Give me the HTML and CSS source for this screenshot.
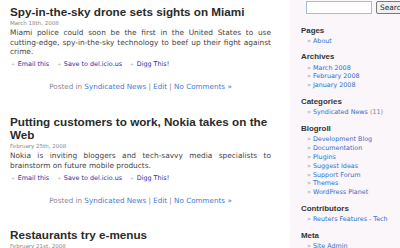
FILE: index.html
```html
<!DOCTYPE html>
<html>
<head>
<meta charset="utf-8">
<link rel="stylesheet" href="styles.css">
</head>
<body>
<div class="page">
  <main class="content">
    <article class="post">
      <h2 class="title">Spy-in-the-sky drone sets sights on Miami</h2>
      <div class="date">March 18th, 2008</div>
      <p class="entry">Miami police could soon be the first in the United States to use cutting-edge, spy-in-the-sky technology to beef up their fight against crime.</p>
      <ul class="actions">
        <li><span class="plus">+</span><a href="#">Email this</a></li>
        <li><span class="plus">+</span><a href="#">Save to del.icio.us</a></li>
        <li><span class="plus">+</span><a href="#">Digg This!</a></li>
      </ul>
      <p class="meta">Posted in <a href="#">Syndicated News</a> | <a href="#">Edit</a> | <a href="#">No Comments »</a></p>
    </article>
    <article class="post">
      <h2 class="title">Putting customers to work, Nokia takes on the Web</h2>
      <div class="date">February 25th, 2008</div>
      <p class="entry">Nokia is inviting bloggers and tech-savvy media specialists to brainstorm on future mobile products.</p>
      <ul class="actions">
        <li><span class="plus">+</span><a href="#">Email this</a></li>
        <li><span class="plus">+</span><a href="#">Save to del.icio.us</a></li>
        <li><span class="plus">+</span><a href="#">Digg This!</a></li>
      </ul>
      <p class="meta">Posted in <a href="#">Syndicated News</a> | <a href="#">Edit</a> | <a href="#">No Comments »</a></p>
    </article>
    <article class="post">
      <h2 class="title">Restaurants try e-menus</h2>
      <div class="date">February 21st, 2008</div>
    </article>
  </main>
  <aside class="sidebar">
    <form class="search">
      <input type="text" class="search-input">
      <button type="button" class="search-btn">Search</button>
    </form>
    <section class="widget">
      <h3>Pages</h3>
      <ul><li><a href="#">About</a></li></ul>
    </section>
    <section class="widget">
      <h3>Archives</h3>
      <ul>
        <li><a href="#">March 2008</a></li>
        <li><a href="#">February 2008</a></li>
        <li><a href="#">January 2008</a></li>
      </ul>
    </section>
    <section class="widget">
      <h3>Categories</h3>
      <ul><li><a href="#">Syndicated News</a> <span class="count">(11)</span></li></ul>
    </section>
    <section class="widget">
      <h3>Blogroll</h3>
      <ul>
        <li><a href="#">Development Blog</a></li>
        <li><a href="#">Documentation</a></li>
        <li><a href="#">Plugins</a></li>
        <li><a href="#">Suggest Ideas</a></li>
        <li><a href="#">Support Forum</a></li>
        <li><a href="#">Themes</a></li>
        <li><a href="#">WordPress Planet</a></li>
      </ul>
    </section>
    <section class="widget">
      <h3>Contributors</h3>
      <ul><li><a href="#">Reuters Features - Tech</a></li></ul>
    </section>
    <section class="widget">
      <h3>Meta</h3>
      <ul><li><a href="#">Site Admin</a></li></ul>
    </section>
  </aside>
</div>
</body>
</html>
```
FILE: styles.css
```css
* { box-sizing: border-box; }
html, body { margin: 0; padding: 0; background: #fff; }
body { font-family: "DejaVu Sans", Verdana, sans-serif; color: #444; }

.page { display: flex; width: 400px; height: 248px; overflow: hidden; }

.content { width: 290px; flex: none; padding: 5px 19px 0 10px; }
.sidebar { flex: 1; min-width: 0; background: #faf6fa; padding: 1px 0 0 11px; overflow: hidden; }

.title { font: bold 11.7px/13.5px "Liberation Sans", Arial, sans-serif; color: #2b2b2b; margin: 0 -8px 0 0; }
.date { font-size: 5.5px; line-height: 8px; color: #888; }
.entry { font-size: 7.4px; line-height: 9.5px; margin: 1.5px 0 0; text-align: justify; color: #444; }

.actions { list-style: none; margin: 3.5px 0 0; padding: 0 0 0 1px; display: flex; gap: 8px; font-size: 6.4px; line-height: 8px; }
.actions li { display: flex; align-items: center; }
.plus { color: #bbb; font-size: 5px; margin-right: 2.5px; }
.actions a { color: #2a2aa8; text-decoration: none; }

.meta { text-align: center; font-size: 7.2px; line-height: 9.5px; color: #888; margin: 14px 0 23.2px; }
.meta a { color: #3d7bd4; text-decoration: none; }

.search { display: flex; gap: 4px; margin: 0 0 11.7px 5px; height: 13px; }
.search-input { flex: none; width: 66px; height: 13px; border: 1px solid #a9bcd6; padding: 0; background: #fff; }
.search-btn { flex: none; height: 13px; font: 7.4px/1 "DejaVu Sans", sans-serif; padding: 0 3px; border: 1px solid #7a7a7a; background: #f0f0f0; border-radius: 2px; color: #222; white-space: nowrap; }

.widget h3 { font: bold 7.9px/10px "Liberation Sans", Arial, sans-serif; color: #333; margin: 0; }
.widget ul { list-style: none; margin: 1.2px 0 6.5px; padding: 0 0 0 6px; font-size: 6.4px; line-height: 8.95px; }
.widget li::before { content: "» "; color: #999; }
.widget a { color: #3370c8; text-decoration: none; }
.count { color: #888; }
```
